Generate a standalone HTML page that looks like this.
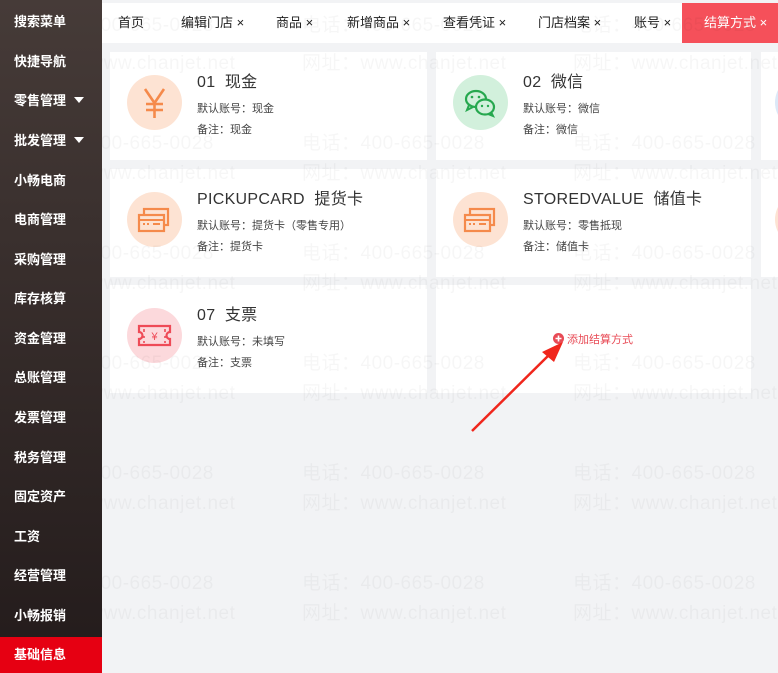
<!DOCTYPE html>
<html><head><meta charset="utf-8">
<style>
*{margin:0;padding:0;box-sizing:border-box}
body{width:778px;height:672px;overflow:hidden;background:#f2f3f5;font-family:"Liberation Sans","Noto Sans CJK SC",sans-serif;position:relative}
.side{position:absolute;left:0;top:0;width:102px;height:672px;background:linear-gradient(#463b38,#231b1b)}
.side div{position:absolute;left:14px;color:#fff;font-size:13px;line-height:20px;font-weight:bold}
.side .act{left:0;width:102px;height:36px;top:637px;background:#e60012;padding-left:14px;line-height:36px}
.tri{display:inline-block;width:0;height:0;border-left:5px solid transparent;border-right:5px solid transparent;border-top:6px solid #fff;margin-left:8px;vertical-align:2px}
.tabs{position:absolute;left:102px;top:3px;width:676px;height:40px;background:#fff}
.tabs span{position:absolute;top:11px;font-size:13px;color:#222;line-height:18px}
.tabs .on{left:580px;top:0;width:96px;height:40px;background:#f5505a;color:#fff;line-height:40px;padding-left:22px}
.card{position:absolute;background:#fff;height:108px}
.ic{position:absolute;left:17px;top:23px;width:55px;height:55px;border-radius:50%}
.ic svg{position:absolute;left:0;top:0}
.t{position:absolute;left:87px;top:16px;font-size:16px;color:#333;letter-spacing:.3px}
.l1,.l2{position:absolute;left:87px;font-size:11px;color:#444}
.l1{top:48px}.l2{top:69px}
.wm{position:absolute;left:102px;top:0;width:676px;height:672px;overflow:hidden;pointer-events:none}
.wm span{position:absolute;font-size:19px;color:rgba(0,0,0,0.035);white-space:nowrap;letter-spacing:.5px}
</style></head><body>
<div class="side">
<div style="top:12px">搜索菜单</div>
<div style="top:52px">快捷导航</div>
<div style="top:91px">零售管理<span class="tri"></span></div>
<div style="top:131px">批发管理<span class="tri"></span></div>
<div style="top:171px">小畅电商</div>
<div style="top:210px">电商管理</div>
<div style="top:250px">采购管理</div>
<div style="top:289px">库存核算</div>
<div style="top:329px">资金管理</div>
<div style="top:368px">总账管理</div>
<div style="top:408px">发票管理</div>
<div style="top:448px">税务管理</div>
<div style="top:487px">固定资产</div>
<div style="top:527px">工资</div>
<div style="top:566px">经营管理</div>
<div style="top:606px">小畅报销</div>
<div class="act">基础信息</div>
</div>
<div class="tabs">
<span style="left:16px">首页</span>
<span style="left:79px">编辑门店 ×</span>
<span style="left:174px">商品 ×</span>
<span style="left:245px">新增商品 ×</span>
<span style="left:341px">查看凭证 ×</span>
<span style="left:436px">门店档案 ×</span>
<span style="left:532px">账号 ×</span>
<span class="on">结算方式 ×</span>
</div>

<div class="card" style="left:110px;top:52px;width:317px">
<div class="ic" style="background:#fde3d3"><svg width="55" height="55"><path d="M18 14 L27.5 28 L37 14 M27.5 28 V43 M19 29 H36 M19 35 H36" stroke="#f58a4b" stroke-width="2.6" fill="none"/></svg></div>
<div class="t">01&nbsp; 现金</div><div class="l1">默认账号：现金</div><div class="l2">备注：现金</div></div>
<div class="card" style="left:436px;top:52px;width:315px">
<div class="ic" style="background:#d2f0dc"><svg width="55" height="55"><ellipse cx="23" cy="24" rx="10" ry="8" fill="none" stroke="#27a84f" stroke-width="2.2"/><path d="M16 30 l-2 5 l6 -3" fill="none" stroke="#27a84f" stroke-width="2"/><ellipse cx="32" cy="32" rx="9" ry="7.5" fill="#d2f0dc" stroke="#27a84f" stroke-width="2.2"/><path d="M38 37 l2 4 l-5 -2" fill="none" stroke="#27a84f" stroke-width="2"/><circle cx="19" cy="22" r="1.3" fill="#27a84f"/><circle cx="26" cy="22" r="1.3" fill="#27a84f"/><circle cx="29" cy="31" r="1.2" fill="#27a84f"/><circle cx="35" cy="31" r="1.2" fill="#27a84f"/></svg></div>
<div class="t">02&nbsp; 微信</div><div class="l1">默认账号：微信</div><div class="l2">备注：微信</div></div>
<div class="card" style="left:761px;top:52px;width:40px"><div class="ic" style="left:14px;background:#dce8f7"></div></div>

<div class="card" style="left:110px;top:169px;width:317px">
<div class="ic" style="background:#fde3d3"><svg width="55" height="55"><rect x="17" y="17" width="24" height="16" fill="none" stroke="#f58a4b" stroke-width="2.2"/><rect x="12" y="23" width="25" height="16" fill="#fde3d3" stroke="#f58a4b" stroke-width="2.2"/><path d="M12 28 H37 M16 32 h2 M20 32 h2 M26 32 h7" stroke="#f58a4b" stroke-width="2"/></svg></div>
<div class="t">PICKUPCARD&nbsp; 提货卡</div><div class="l1">默认账号：提货卡（零售专用）</div><div class="l2">备注：提货卡</div></div>
<div class="card" style="left:436px;top:169px;width:315px">
<div class="ic" style="background:#fde3d3"><svg width="55" height="55"><rect x="17" y="17" width="24" height="16" fill="none" stroke="#f58a4b" stroke-width="2.2"/><rect x="12" y="23" width="25" height="16" fill="#fde3d3" stroke="#f58a4b" stroke-width="2.2"/><path d="M12 28 H37 M16 32 h2 M20 32 h2 M26 32 h7" stroke="#f58a4b" stroke-width="2"/></svg></div>
<div class="t">STOREDVALUE&nbsp; 储值卡</div><div class="l1">默认账号：零售抵现</div><div class="l2">备注：储值卡</div></div>
<div class="card" style="left:761px;top:169px;width:40px"><div class="ic" style="left:14px;background:#fde3d3"></div></div>

<div class="card" style="left:110px;top:285px;width:317px">
<div class="ic" style="background:#fcd9dc"><svg width="55" height="55"><path d="M12 18 H43 V24 a3.5 3.5 0 0 0 0 7 V37 H12 V31 a3.5 3.5 0 0 0 0 -7 Z" fill="none" stroke="#ee4b57" stroke-width="2.2"/><path d="M17 21 v3 M17 28 v2 M17 33 v2 M38 21 v3 M38 28 v2 M38 33 v2" stroke="#ee4b57" stroke-width="1.6"/><text x="27.5" y="32" text-anchor="middle" font-size="11" fill="#ee4b57" font-family="Liberation Sans">¥</text></svg></div>
<div class="t">07&nbsp; 支票</div><div class="l1">默认账号：未填写</div><div class="l2">备注：支票</div></div>
<div class="card" style="left:436px;top:285px;width:315px">
<div style="position:absolute;left:117px;top:48px;font-size:11px;color:#e84a55;line-height:14px"><svg width="11" height="11" style="vertical-align:-1px;margin-right:3px"><circle cx="5.5" cy="5.5" r="5.5" fill="#e84a55"/><path d="M5.5 2.5 V8.5 M2.5 5.5 H8.5" stroke="#fff" stroke-width="1.6"/></svg>添加结算方式</div>
</div>

<svg style="position:absolute;left:0;top:0" width="778" height="672"><path d="M472 431 L552 352" stroke="#f0261c" stroke-width="2.5"/><path d="M563 342 L542 352 L554 362 Z" fill="#f0261c"/></svg>

<div class="wm">
<span style="left:-71px;top:10px">电话：400-665-0028</span><span style="left:200px;top:10px">电话：400-665-0028</span><span style="left:471px;top:10px">电话：400-665-0028</span>
<span style="left:-71px;top:48px">网址：www.chanjet.net</span><span style="left:200px;top:48px">网址：www.chanjet.net</span><span style="left:471px;top:48px">网址：www.chanjet.net</span>
<span style="left:-71px;top:128px">电话：400-665-0028</span><span style="left:200px;top:128px">电话：400-665-0028</span><span style="left:471px;top:128px">电话：400-665-0028</span>
<span style="left:-71px;top:158px">网址：www.chanjet.net</span><span style="left:200px;top:158px">网址：www.chanjet.net</span><span style="left:471px;top:158px">网址：www.chanjet.net</span>
<span style="left:-71px;top:238px">电话：400-665-0028</span><span style="left:200px;top:238px">电话：400-665-0028</span><span style="left:471px;top:238px">电话：400-665-0028</span>
<span style="left:-71px;top:268px">网址：www.chanjet.net</span><span style="left:200px;top:268px">网址：www.chanjet.net</span><span style="left:471px;top:268px">网址：www.chanjet.net</span>
<span style="left:-71px;top:348px">电话：400-665-0028</span><span style="left:200px;top:348px">电话：400-665-0028</span><span style="left:471px;top:348px">电话：400-665-0028</span>
<span style="left:-71px;top:378px">网址：www.chanjet.net</span><span style="left:200px;top:378px">网址：www.chanjet.net</span><span style="left:471px;top:378px">网址：www.chanjet.net</span>
<span style="left:-71px;top:458px">电话：400-665-0028</span><span style="left:200px;top:458px">电话：400-665-0028</span><span style="left:471px;top:458px">电话：400-665-0028</span>
<span style="left:-71px;top:488px">网址：www.chanjet.net</span><span style="left:200px;top:488px">网址：www.chanjet.net</span><span style="left:471px;top:488px">网址：www.chanjet.net</span>
<span style="left:-71px;top:568px">电话：400-665-0028</span><span style="left:200px;top:568px">电话：400-665-0028</span><span style="left:471px;top:568px">电话：400-665-0028</span>
<span style="left:-71px;top:598px">网址：www.chanjet.net</span><span style="left:200px;top:598px">网址：www.chanjet.net</span><span style="left:471px;top:598px">网址：www.chanjet.net</span>
</div>
</body></html>
